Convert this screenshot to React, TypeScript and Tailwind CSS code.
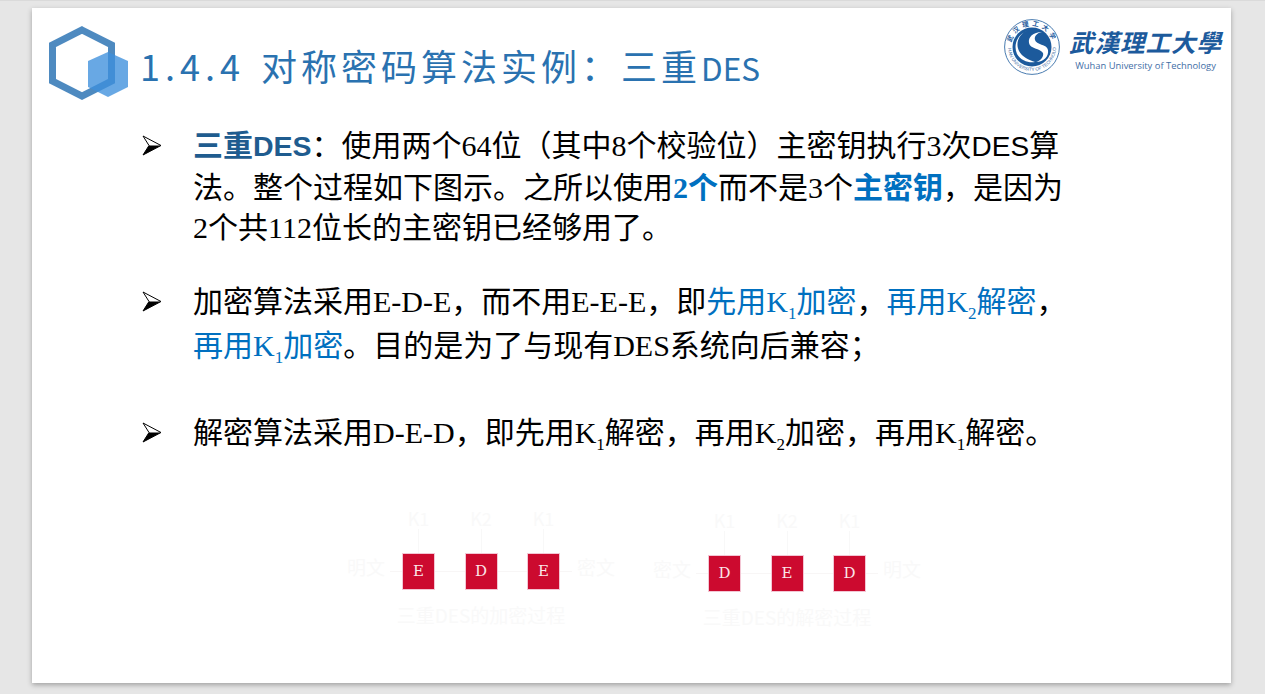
const cjk = "font-['Liberation_Serif','Noto_Sans_CJK_SC',serif]";
const ghost = "font-['Noto_Sans_CJK_SC',sans-serif] text-[#f9f9f9]";

function HexLogo() {
  return (
    <svg width="80" height="75" viewBox="0 0 80 75" className="shrink-0">
      <polygon points="33,4 62.5,19 62.5,55 33,70 3.5,55 3.5,19" fill="none" stroke="#2f75b5" strokeOpacity="0.85" strokeWidth="7" />
      <polygon points="59,26 79,35 79,61 59,71 39,61 39,35" fill="#3d8fdc" fillOpacity="0.78" />
    </svg>
  );
}

function Emblem() {
  return (
    <svg width="56" height="56" viewBox="0 0 56 56" className="shrink-0">
      <defs>
        <path id="ring-top" d="M7 28A21 21 0 0 1 49 28" />
        <path id="ring-bottom" d="M4 28A24 24 0 0 0 52 28" />
      </defs>
      <circle cx="28" cy="28" r="27.4" fill="#fff" stroke="#1c5a9c" strokeWidth="0.8" />
      <circle cx="28" cy="28" r="19.5" fill="#1c5a9c" />
      <text fontSize="6.5" fontWeight="700" fill="#1c5a9c" fontFamily="'Noto Sans CJK SC', sans-serif">
        <textPath href="#ring-top" startOffset="50%" textAnchor="middle" letterSpacing="3">武汉理工大学</textPath>
      </text>
      <text fontSize="4.6" fill="#3f6ea6" fontFamily="'Liberation Sans', sans-serif">
        <textPath href="#ring-bottom" startOffset="50%" textAnchor="middle">WUHAN UNIVERSITY OF TECHNOLOGY</textPath>
      </text>
      <path d="M25 11C15 14 11 24 15 32C18 38 25 41 31 43C25 44 17 42 13 35C9 26 13 15 25 11Z" fill="#fff" />
      <path d="M38 13C29 13 24 18 25 24C26 30 36 29 39 34C40 37 37 42 32 43C40 43 45 37 44 31C43 25 32 26 31 21C30 17 33 14 38 13Z" fill="#fff" />
    </svg>
  );
}

function Wordmark() {
  return (
    <div className="flex flex-col items-center mt-[8px]">
      <div className="font-['Noto_Sans_CJK_SC',sans-serif] text-[24.5px] leading-[30px] font-bold tracking-[1px] text-[#1c5a9c] italic whitespace-nowrap">
        武漢理工大學
      </div>
      <div className="font-['Open_Sans',sans-serif] text-[9.4px] leading-[13px] mt-[1.5px] text-[#3f6ea6] whitespace-nowrap">
        Wuhan University of Technology
      </div>
    </div>
  );
}

function Bullet({ className }: { className: string }) {
  return (
    <svg width="20" height="21" viewBox="0 0 20 21" className={`shrink-0 ${className}`}>
      <path d="M1 1L19 10.5L1 20L7 10.5Z" fill="#fff" stroke="#000" strokeWidth="1" />
      <path d="M19 10.5L1 20L7 10.5Z" fill="#000" />
    </svg>
  );
}

function K({ n }: { n: number }) {
  return (
    <>
      K<sub className="text-[17px] leading-none align-[-3px]">{n}</sub>
    </>
  );
}

function Block({ label }: { label: string }) {
  return (
    <div className="w-[33px] h-[37px] shrink-0 bg-[#cc0a2f] border border-[#f3c6d4] flex items-center justify-center font-['DejaVu_Serif',serif] text-[15px] text-[#fbe6ea]">
      {label}
    </div>
  );
}

function Link() {
  return <div className="w-[29.5px] h-px shrink-0 bg-[#f8f6f6]" />;
}

type DiagramProps = { blocks: string[]; caption: string; left: string; right: string; tops: string[]; className?: string };

function Diagram({ blocks, caption, left, right, tops, className }: DiagramProps) {
  return (
    <div className={`flex flex-col items-center ${className ?? ""}`}>
      <div className={`flex gap-[29.5px] h-[46px] text-[18px] leading-[22px] ${ghost}`}>
        {tops.map((t, i) => (
          <div key={i} className="w-[33px] flex flex-col items-center">
            <span>{t}</span>
            <div className="w-px flex-1 bg-[#f8f8f8]" />
          </div>
        ))}
      </div>
      <div className="flex items-center">
        <span className={`w-[48px] text-[19px] text-center mb-[8px] ${ghost}`}>{left}</span>
        <div className="w-[12px] h-px bg-[#f8f6f6]" />
        <Block label={blocks[0]} />
        <Link />
        <Block label={blocks[1]} />
        <Link />
        <Block label={blocks[2]} />
        <div className="w-[12px] h-px bg-[#f8f6f6]" />
        <span className={`w-[48px] text-[19px] text-center mb-[8px] ${ghost}`}>{right}</span>
      </div>
      <div className={`mt-[13px] text-[19px] leading-[24px] ${ghost}`}>{caption}</div>
    </div>
  );
}

export default function App() {
  return (
    <div className="w-[1265px] h-[694px] overflow-hidden bg-[#e6e6e6] border-t border-[#dadada] pt-[7px] pl-[32px]">
      <div className="w-[1199px] h-[675px] bg-white shadow-[0_2px_5px_rgba(0,0,0,0.3)] flex flex-col">
        <header className="flex items-start pl-[17px] pr-[9px] pt-[18px]">
          <HexLogo />
          <h1 className="ml-[11px] mt-[15px] font-['Noto_Sans_CJK_SC',sans-serif] text-[36px] leading-[48px] tracking-[4px] [word-spacing:4px] text-[#2a72b0] whitespace-nowrap">
            <span className="tracking-[5px]">1.4.4</span> 对称密码算法实例：三重<span className="text-[31.5px] tracking-normal">DES</span>
          </h1>
          <div className="ml-auto flex items-start gap-[9px] -mt-[7px]">
            <Emblem />
            <Wordmark />
          </div>
        </header>

        <main className={`${cjk} pl-[110px] mt-[25px] text-[30px] leading-[40.5px] text-black`}>
          <div className="flex gap-[31px]">
            <Bullet className="mt-[9px]" />
            <p className="w-[880px]">
              <b className="font-['Liberation_Sans','Noto_Sans_CJK_SC',sans-serif] text-[#1f5c8f]">三重<span className="text-[28.5px]">DES</span></b>：使用两个64位（其中8个校验位）主密钥执行3次<span className="font-['Liberation_Sans','Noto_Sans_CJK_SC',sans-serif] text-[28px]">DES</span>算法。整个过程如下图示。之所以使用<b className="text-[#0070c0]">2个</b>而不是3个<b className="text-[#0070c0]">主密钥</b>，是因为2个共112位长的主密钥已经够用了。
            </p>
          </div>
          <div className="flex gap-[31px] mt-[31px]">
            <Bullet className="mt-[11px]" />
            <p className="w-[880px] leading-[44px]">
              加密算法采用E-D-E，而不用E-E-E，即<span className="text-[#0070c0]">先用<K n={1} />加密</span>，<span className="text-[#0070c0]">再用<K n={2} />解密</span>，<span className="text-[#0070c0]">再用<K n={1} />加密</span>。目的是为了与现有DES系统向后兼容；
            </p>
          </div>
          <div className="flex gap-[31px] mt-[43px]">
            <Bullet className="mt-[11px]" />
            <p className="w-[880px] leading-[44px]">
              解密算法采用D-E-D，即先用<K n={1} />解密，再用<K n={2} />加密，再用<K n={1} />解密。
            </p>
          </div>
        </main>

        <section className="flex items-start gap-[28px] pl-[310px] mt-[52px]">
          <Diagram blocks={["E", "D", "E"]} tops={["K1", "K2", "K1"]} left="明文" right="密文" caption="三重DES的加密过程" />
          <Diagram blocks={["D", "E", "D"]} tops={["K1", "K2", "K1"]} left="密文" right="明文" caption="三重DES的解密过程" className="mt-[2px]" />
        </section>
      </div>
    </div>
  );
}
